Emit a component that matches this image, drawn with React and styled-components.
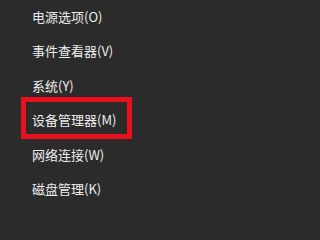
import React from 'react';
import styled, { createGlobalStyle } from 'styled-components';

const GlobalStyle = createGlobalStyle`
  html, body {
    margin: 0;
    padding: 0;
    background: #2b2b2b;
  }
`;

const items = [
  { label: '电源选项(O)' },
  { label: '事件查看器(V)' },
  { label: '系统(Y)' },
  { label: '设备管理器(M)', marked: true },
  { label: '网络连接(W)' },
  { label: '磁盘管理(K)' },
];

const Menu = styled.ul`
  list-style: none;
  margin: 0;
  padding: 0 0 0 32px;
  width: 306px;
  height: 238px;
  box-sizing: border-box;
  background: #2b2b2b;
  font-family: 'Noto Sans CJK SC', 'Noto Sans', sans-serif;
  font-size: 13px;
  color: #ededed;
  overflow: hidden;
`;

const MenuItem = styled.li`
  position: relative;
  height: 34.4px;
  line-height: 34.4px;
  white-space: nowrap;

  ${(p) => p.$marked && `
    &::after {
      content: '';
      position: absolute;
      left: -11px;
      top: -6px;
      width: 111px;
      height: 42px;
      box-sizing: border-box;
      border: 5px solid #e8101c;
      pointer-events: none;
    }
  `}
`;

export default function App() {
  return (
    <>
      <GlobalStyle />
      <Menu>
        {items.map((item) => (
          <MenuItem key={item.label} $marked={item.marked}>
            {item.label}
          </MenuItem>
        ))}
      </Menu>
    </>
  );
}
